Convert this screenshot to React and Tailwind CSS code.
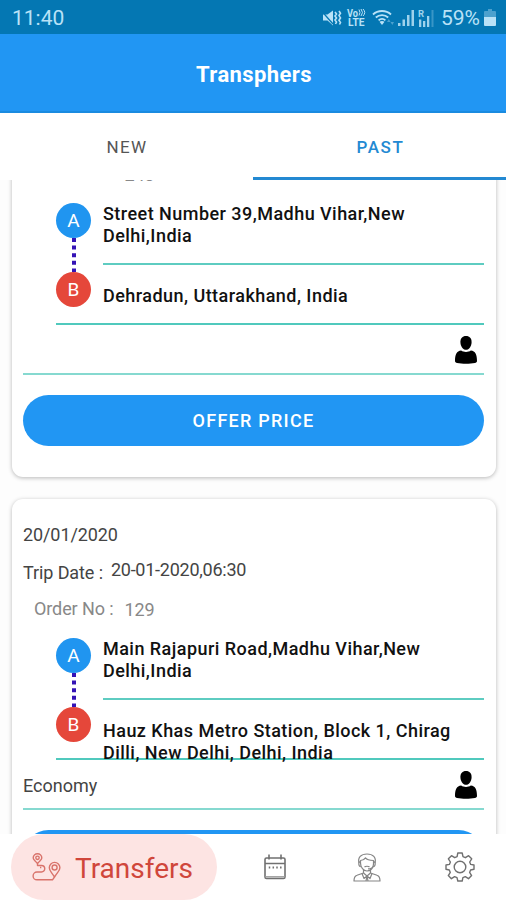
const orders = [
  {
    id: 1,
    date: '20/01/2020',
    tripDate: '20-01-2020,06:30',
    orderNo: '243',
    from: ['Street Number 39,Madhu Vihar,New', 'Delhi,India'],
    to: ['Dehradun, Uttarakhand, India'],
    category: '',
  },
  {
    id: 2,
    date: '20/01/2020',
    tripDate: '20-01-2020,06:30',
    orderNo: '129',
    from: ['Main Rajapuri Road,Madhu Vihar,New', 'Delhi,India'],
    to: ['Hauz Khas Metro Station, Block 1, Chirag', 'Dilli, New Delhi, Delhi, India'],
    category: 'Economy',
  },
];

const MuteIcon = () => (
  <svg width="20" height="18" viewBox="0 0 20 18" fill="currentColor">
    <path d="M1 5.500h4.500l5.500-4v15l-5.500-5H1z" />
    <path d="M0 2.500L11 15" stroke="#0477b3" strokeWidth="1.300" />
    <path
      d="M13 3l1.500 2-1.500 2 1.500 2-1.500 2 1.500 2-1 2M17 2l1.500 2.300L17 6.600l1.500 2.300L17 11.200l1.500 2.300-1 2"
      fill="none"
      stroke="currentColor"
      strokeWidth="1.600"
    />
  </svg>
);

const VolteIcon = () => (
  <svg width="19" height="19" viewBox="0 0 19 19" fill="currentColor" className="overflow-visible">
    <text x="0" y="8.500" fontSize="10" fontWeight="700" textLength="11" lengthAdjust="spacingAndGlyphs">Vo</text>
    <path d="M12 1.500q2 3 0 6M14 1q3 3.500 0 7M16 1q3.500 3.500 0 7" fill="none" stroke="currentColor" strokeWidth="1" />
    <text x="1" y="18" fontSize="10.500" fontWeight="700" textLength="16.500" lengthAdjust="spacingAndGlyphs">LTE</text>
  </svg>
);

const WifiIcon = () => (
  <svg width="23" height="18" viewBox="0 0 23 18" fill="none" stroke="currentColor" strokeWidth="1.800">
    <path d="M1 5.500C6 .8 14 .8 19 5.500M3.800 8.500c3.500-3.200 9-3.200 12.400 0M6.600 11.300c2-1.800 4.900-1.800 6.800 0" />
    <path d="M7.500 12.800c1.500-1.200 3.500-1.200 5 0L10 16z" fill="currentColor" stroke="none" />
    <path d="M15 13l1.800-3 1.800 3zM18.500 13l1.800 3 1.700-3z" fill="currentColor" stroke="none" opacity="0.4" />
  </svg>
);

const SignalIcon = () => (
  <svg width="16" height="17" viewBox="0 0 16 17" fill="currentColor" opacity="0.85">
    <path d="M0 14h2.500v3H0zM4.500 10.500H7V17H4.500zM9 6h2.500v11H9zM13.500 1H16v16h-2.500z" />
  </svg>
);

const RoamingIcon = () => (
  <svg width="16" height="18" viewBox="0 0 16 18" fill="currentColor" opacity="0.85">
    <text x="0" y="8" fontSize="9.500" fontWeight="700">R</text>
    <path d="M1 10.500h2.300V18H1zM5 12h2.300v6H5zM9 7h2.300v11H9z" />
    <path d="M13.500 1h2v17h-2z" opacity="0.35" />
  </svg>
);

const BatteryIcon = () => (
  <svg width="12" height="17" viewBox="0 0 12 17" fill="currentColor">
    <path d="M4 0h4v2h3q1 0 1 1v5H0V3q0-1 1-1h3z" opacity="0.4" />
    <path d="M0 8h12v8q0 1-1 1H1q-1 0-1-1z" />
  </svg>
);

const PersonIcon = () => (
  <svg width="22" height="28" viewBox="0 0 22 28" fill="#000">
    <path d="M11 0C7.300 0 5.400 2.500 5.400 6c0 4 2.500 7.800 5.600 7.800S16.600 10 16.600 6c0-3.500-1.900-6-5.600-6z" />
    <path d="M6.200 14.500c1.400 1 2.900 1.400 4.800 1.400s3.400-.4 4.800-1.400c4.600.4 6.200 4 6.200 10.400 0 1-.8 1.900-2.100 2.200-4.900 1-12.900 1-17.800 0C.8 26.800 0 25.900 0 24.900c0-6.400 1.600-10 6.200-10.400z" />
  </svg>
);

const RouteIcon = () => (
  <svg width="30" height="29" viewBox="0 0 30 29" fill="none" stroke="#d9736b" strokeWidth="1.400" strokeLinejoin="round">
    <path d="M5.500 10.500C3 7.500 1.200 6.800 1.200 5A4.300 4.300 0 0 1 9.800 5c0 1.800-1.800 2.500-4.300 5.500z" />
    <circle cx="5.500" cy="4.800" r="1.700" />
    <path d="M22.500 24c-3-5-5.200-6.200-5.200-9.300a5.300 5.300 0 0 1 10.600 0c0 3.100-2.200 4.300-5.400 9.300z" />
    <circle cx="22.600" cy="14.500" r="2.500" />
    <path d="M5.500 10.500v2h4a3.200 3.200 0 0 1 0 6.500H5a3.900 3.900 0 0 0 0 7.800h15.500l2-2.800M8 14.500h1.300" />
  </svg>
);

const CalendarIcon = () => (
  <svg width="22" height="26" viewBox="0 0 22 26" fill="none" stroke="#707070" strokeWidth="1.600">
    <rect x="1" y="4" width="20" height="20.500" rx="1.500" />
    <path d="M1 9.500h20M5 .5v5M17 .5v5" />
    <path d="M5.500 12.500v2M9.300 12.500v2M13 12.500v2M16.800 12.500v2" strokeWidth="1.500" />
    <path d="M1.500 22.800h19" stroke="#a5a5a5" />
  </svg>
);

const AgentIcon = () => (
  <svg width="28" height="29" viewBox="0 0 28 29" fill="none" stroke="#858585" strokeWidth="1.200" strokeLinejoin="round">
    <path d="M6 10C4.500 4.500 8 1 14 1s9.500 3.500 8 9" />
    <path d="M7.500 10V7.500c2-.2 4-1.300 5-2.700 1.500 2 4.500 2.500 8 2.700V11c0 4-3 7-6.500 7s-6.500-3.500-6.500-8z" />
    <path d="M7.500 8.500c-2.300 0-2.300 5 .3 5.200M20.500 8.500c2.300 0 2.300 5-.3 5.200M20 13.500c-.8 2-2.500 2.400-5 2.400M11.500 14c1-1 4-1 5 0" />
    <path d="M10.500 17v3L4 22.300C1.800 23 1 25 1 28h26c0-3-.8-5-3-5.700L17.500 20v-3" />
    <path d="M10.500 20l3.500 3 3.500-3M9 20.500l2 5 3-2.500 3 2.500 2-5M14 23l-1 5M14 23l1 5" />
  </svg>
);

const GearIcon = () => (
  <svg width="30" height="30" viewBox="0 0 30 30" fill="none" stroke="#707070" strokeWidth="1.400" strokeLinejoin="round">
    <circle cx="15" cy="15" r="5.800" />
    <path d="M12.800 1h4.400l.8 3.700 2.400 1 3.200-2 3.100 3.100-2 3.200 1 2.400 3.300.6v4.200l-3.400.8-1 2.400 2 3.200-3.100 3.100-3.200-2-2.400 1-.7 3.300h-4.400l-.8-3.300-2.400-1-3.200 2-3.100-3.100 2-3.200-1-2.400L1 17.200V13l3.400-.6 1-2.400-2-3.200 3.100-3.100 3.200 2 2.400-1z" />
  </svg>
);

const RoutePoints = () => (
  <div className="flex w-[35px] shrink-0 flex-col items-center pt-[6px] text-[19px] text-white">
    <div className="flex h-[35px] w-[35px] items-center justify-center rounded-full bg-[#2095f0] pt-px">A</div>
    <svg width="4" height="34" viewBox="0 0 4 34">
      <path d="M2 0v34" stroke="#3413b5" strokeWidth="4" strokeDasharray="4 3.600" />
    </svg>
    <div className="flex h-[35px] w-[35px] items-center justify-center rounded-full bg-[#e5473a] pt-px">B</div>
  </div>
);

const Address = ({ lines }) => (
  <p className="text-[18px] leading-[22px] font-medium tracking-[0.46px] whitespace-nowrap text-[#111]">
    {lines.map((line) => (
      <span key={line} className="block">{line}</span>
    ))}
  </p>
);

const OrderCard = ({ order }) => (
  <div className="h-[413px] shrink-0 rounded-[11px] bg-white pt-[26px] pr-3 pl-[11px] text-[18px] text-[#444] shadow-[0_1px_4px_rgba(0,0,0,0.28)]">
    <div className="h-5 leading-5 tracking-[-0.1px]">{order.date}</div>
    <div className="mt-[14px] flex h-6 items-start gap-[8px] leading-5">
      <span className="pt-1 tracking-[-0.1px]">Trip Date :</span>
      <span className="pt-px tracking-[-0.25px]">{order.tripDate}</span>
    </div>
    <div className="mt-4 flex h-[21px] gap-[11px] pl-[11px] leading-5 tracking-[-0.1px] text-[#888]">
      <span>Order No :</span>
      <span className="pt-px">{order.orderNo}</span>
    </div>
    <div className="ml-[33px] flex h-[140px] gap-3 border-b-2 border-[#50c9bd] pt-3">
      <RoutePoints />
      <div className="flex-1 pt-[6px]">
        <div className="h-[62px] border-b-2 border-[#5eccc1]">
          <Address lines={order.from} />
        </div>
        <div className="h-[58px] pt-5">
          <Address lines={order.to} />
        </div>
      </div>
    </div>
    <div className="flex h-[50px] items-center justify-between border-b-2 border-[#86d9d0] pr-[7px]">
      <span className="pt-[3px]">{order.category}</span>
      <div className="pt-px"><PersonIcon /></div>
    </div>
    <button className="mt-5 h-[51px] w-full rounded-full bg-[#2196f3] text-[18px] font-medium tracking-[1.25px] text-white">
      OFFER PRICE
    </button>
  </div>
);

const StatusBar = () => (
  <div className="flex h-[34px] shrink-0 items-center justify-between bg-[#0477b3] pr-[10px] pl-3 text-[21px] text-[#b9e2f7]">
    <span className="pt-[3px]">11:40</span>
    <div className="flex items-center pt-px">
      <MuteIcon />
      <div className="ml-[5px] flex"><VolteIcon /></div>
      <div className="ml-[6px] flex"><WifiIcon /></div>
      <div className="ml-[3px] flex"><SignalIcon /></div>
      <div className="ml-[4px] flex"><RoamingIcon /></div>
      <span className="ml-[7px] w-[43px] pt-0.5">59%</span>
      <BatteryIcon />
    </div>
  </div>
);

const App = () => {
  return (
    <div className="flex h-[900px] w-[506px] flex-col overflow-hidden bg-[#fdfdfd] font-[Roboto,sans-serif]">
      <StatusBar />
      <header className="flex h-[79px] shrink-0 items-center justify-center border-b-2 border-[#1a8be0] bg-[#2196f3] pt-1 pl-0.5 text-[22px] font-bold tracking-[0.4px] text-white">
        <h1>Transphers</h1>
      </header>
      <div className="grid h-[67px] shrink-0 grid-cols-2 bg-white text-[17px] tracking-[1.4px]">
        <button className="border-b-[3px] border-transparent pt-[5px] pl-px text-[#555]">NEW</button>
        <button className="border-b-[3px] border-[#2389d2] pt-[5px] pl-0.5 font-medium tracking-[1.6px] text-[#2389d2]">PAST</button>
      </div>
      <main className="h-[654px] shrink-0 overflow-hidden pr-[10px] pl-3">
        <div className="-mt-[116px] flex flex-col gap-[22px]">
          {orders.map((order) => (
            <OrderCard key={order.id} order={order} />
          ))}
        </div>
      </main>
      <nav className="flex h-[66px] shrink-0 items-center bg-white pl-[11px]">
        <div className="flex h-[66px] w-[206px] items-center gap-[13px] rounded-full bg-[#fde4e3] pl-[21px]">
          <RouteIcon />
          <span className="pt-[3px] text-[28px] text-[#d0463b]">Transfers</span>
        </div>
        <div className="flex flex-1 items-center justify-between pr-[31px] pl-[47px]">
          <CalendarIcon />
          <div className="pl-[3px]"><AgentIcon /></div>
          <GearIcon />
        </div>
      </nav>
    </div>
  );
};

export default App;
